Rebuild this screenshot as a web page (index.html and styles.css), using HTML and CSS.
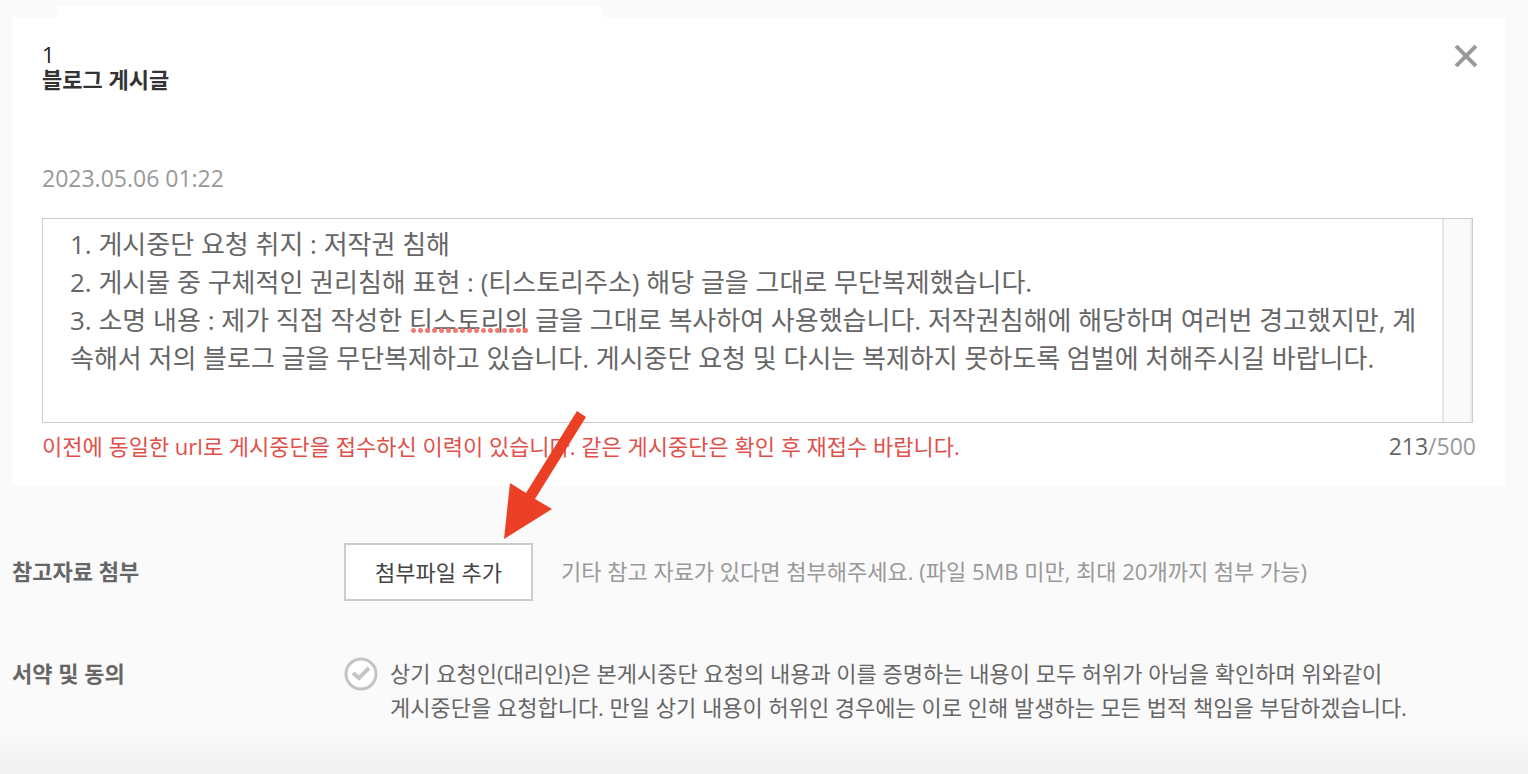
FILE: index.html
```
<!DOCTYPE html>
<html lang="ko">
<head>
	<title>게시중단 요청</title>
	<meta charset="utf-8">
	<meta name="viewport" content="width=device-width, initial-scale=1">
	<link rel="stylesheet" href="styles.css">
</head>
<body>
	<main class="page">
		<div class="tab"></div>
		<section class="card">
			<header class="card-head">
				<div>
					<div class="num">1</div>
					<h2 class="title">블로그 게시글</h2>
				</div>
				<button type="button" class="close" aria-label="닫기">
					<svg width="22" height="22" viewBox="0 0 22 22"><path d="M1 1L21 21M21 1L1 21" stroke="#999" stroke-width="4"/></svg>
				</button>
			</header>
			<time class="date" datetime="2023-05-06T01:22">2023.05.06 01:22</time>
			<div class="editor">
				<textarea class="reason" aria-label="요청 내용" spellcheck="false">1. 게시중단 요청 취지 : 저작권 침해
2. 게시물 중 구체적인 권리침해 표현 : (티스토리주소) 해당 글을 그대로 무단복제했습니다.
3. 소명 내용 : 제가 직접 작성한 티스토리의 글을 그대로 복사하여 사용했습니다. 저작권침해에 해당하며 여러번 경고했지만, 계속해서 저의 블로그 글을 무단복제하고 있습니다. 게시중단 요청 및 다시는 복제하지 못하도록 엄벌에 처해주시길 바랍니다.</textarea>
				<div class="track"></div>
				<span class="spell"></span>
			</div>
			<div class="card-foot">
				<p class="warn">이전에 동일한 url로 게시중단을 접수하신 이력이 있습니다. 같은 게시중단은 확인 후 재접수 바랍니다.</p>
				<p class="count"><strong>213</strong>/500</p>
			</div>
		</section>

		<section class="row attach">
			<h3 class="label">참고자료 첨부</h3>
			<div class="field">
				<button type="button" class="add">첨부파일 추가</button>
				<p class="hint">기타 참고 자료가 있다면 첨부해주세요. (파일 5MB 미만, 최대 20개까지 첨부 가능)</p>
				<svg class="arrow" width="84" height="130" viewBox="0 0 84 130"><path d="M73 1L22 83L6 73L0 129L48 99L31 89L82 7Z" fill="#eb4025"/></svg>
			</div>
		</section>

		<section class="row agree">
			<h3 class="label">서약 및 동의</h3>
			<div class="field">
				<input type="checkbox" id="agree" class="sr">
				<label for="agree" class="terms">
					<svg class="check" width="34" height="34" viewBox="0 0 34 34"><circle cx="17" cy="17" r="15" fill="#fff" stroke="#c4c4c4" stroke-width="3"/><path d="M9 16L15 21L25 11" fill="none" stroke="#c4c4c4" stroke-width="4"/></svg>
					<span>상기 요청인(대리인)은 본게시중단 요청의 내용과 이를 증명하는 내용이 모두 허위가 아님을 확인하며 위와같이<br>게시중단을 요청합니다. 만일 상기 내용이 허위인 경우에는 이로 인해 발생하는 모든 법적 책임을 부담하겠습니다.</span>
				</label>
			</div>
		</section>
	</main>
</body>
</html>
```
FILE: styles.css
```
*{
	box-sizing: border-box;
	margin: 0;
	padding: 0;
}

body{
	font-family: 'Open Sans', 'Noto Sans CJK KR', sans-serif;
	font-size: 22px;
	line-height: 34px;
	color: #666;
	background: #fafafa;
}

.page{
	min-height: 100vh;
	padding: 6px 23px 48px 12px;
	background: linear-gradient(to top, #f1f1f1, #fafafa 44px);
}

.tab{
	width: 545px;
	max-width: 80%;
	height: 11px;
	margin-left: 45px;
	background: #fff;
}

.card{
	padding: 25px 30px 23px;
	background: #fff;
}

.card-head{
	display: flex;
	justify-content: space-between;
	align-items: flex-start;
}

.num, .title{
	font-size: 22px;
	line-height: 25px;
	color: #222;
}

.title{
	color: #333;
	font-weight: bold;
}

.close{
	display: flex;
	border: none;
	background: none;
	margin-top: 3px;
	margin-right: -2px;
}

.date{
	display: block;
	margin-top: 69px;
	font-size: 23px;
	color: #999;
}

.editor{
	position: relative;
	display: flex;
	height: 205px;
	margin-top: 23px;
	margin-right: 2px;
	border: 1px solid #ccc;
}

.reason{
	flex: 1;
	padding: 6px 24px 0 27px;
	border: none;
	outline: none;
	resize: none;
	overflow: hidden;
	font-family: inherit;
	font-size: 26px;
	line-height: 38px;
	color: #666;
	background: #fff;
}

.track{
	width: 30px;
	border-left: 2px solid #e6e6e6;
	border-right: 2px solid #ececec;
	background: #fafafa;
}

.spell{
	position: absolute;
	left: 367px;
	top: 108px;
	width: 119px;
	height: 7px;
	background: radial-gradient(circle, #f27a72 2px, transparent 3px) 0 0 / 7px 7px;
}

.card-foot{
	display: flex;
	justify-content: space-between;
	margin-top: 6px;
}

.warn{
	color: #e0504b;
}

.count{
	margin-right: -1px;
	font-size: 23px;
	color: #999;
}

.count strong{
	font-weight: normal;
	color: #666;
}

.row{
	display: flex;
}

.label{
	flex: none;
	width: 332px;
	font-size: 22px;
	color: #666;
}

.field{
	position: relative;
	display: flex;
	flex: 1;
	align-items: center;
}

.attach{
	align-items: center;
	margin-top: 57px;
}

.attach .label, .hint{
	padding-bottom: 2px;
}

.add{
	width: 189px;
	height: 58px;
	padding-bottom: 2px;
	border: 2px solid #ccc;
	background: #fff;
	font-family: inherit;
	font-size: 22px;
	color: #444;
}

.hint{
	margin-left: 28px;
	color: #999;
}

.arrow{
	position: absolute;
	left: 160px;
	bottom: 61px;
}

.agree{
	margin-top: 55px;
}

.terms{
	display: flex;
	align-items: flex-start;
}

.check{
	flex: none;
	margin-top: 1px;
	margin-right: 12px;
}

.sr{
	position: absolute;
	opacity: 0;
}
```
